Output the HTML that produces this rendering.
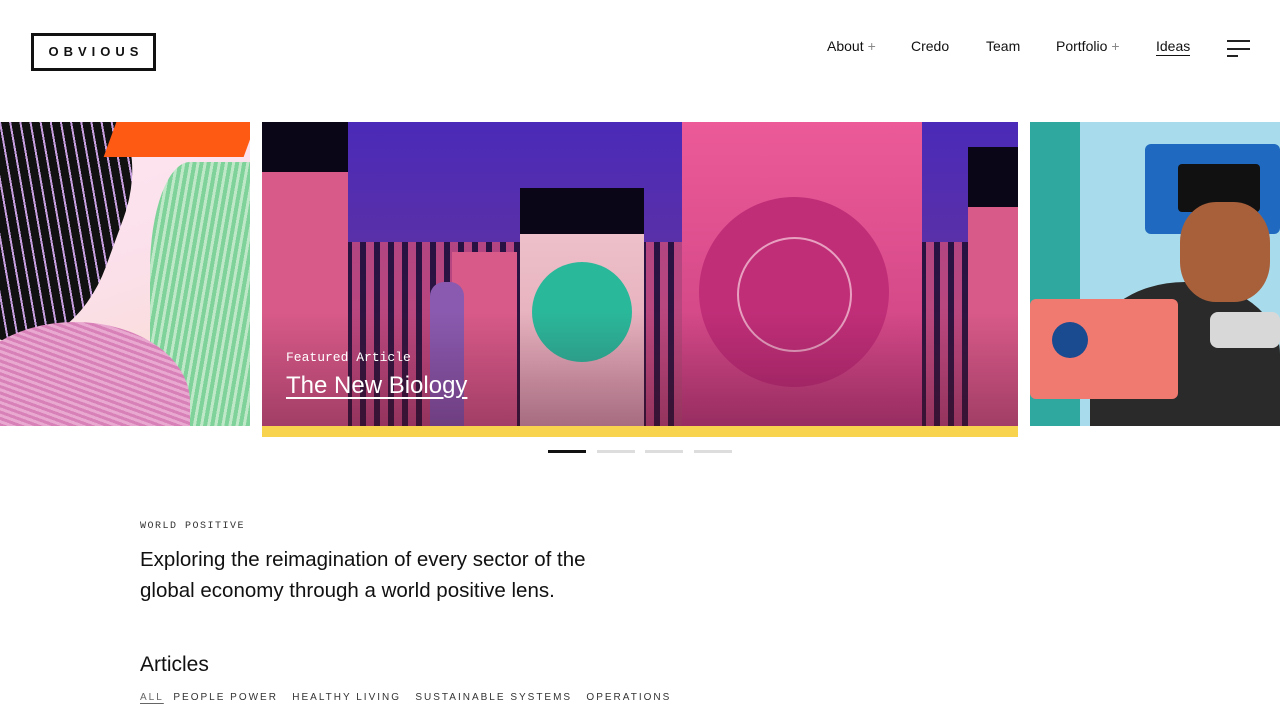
<!DOCTYPE html>
<html><head><meta charset="utf-8"><style>
*{margin:0;padding:0;box-sizing:border-box}
body{width:1280px;height:720px;overflow:hidden;background:#fff;font-family:"Liberation Sans",sans-serif;color:#111;position:relative}
.abs{position:absolute}
.logo{left:31px;top:33px;width:125px;height:38px;border:3px solid #111;font-weight:bold;font-size:13px;letter-spacing:5px;text-align:center;line-height:32px;padding-left:5px}
.nav{top:38px;font-size:14px;color:#111}
.plus{color:#888;margin-left:4px}
.hb{height:2px;background:#222}
.mono{font-family:"Liberation Mono",monospace}
</style></head><body>
<div class="abs logo">OBVIOUS</div>
<div class="abs nav" style="left:827px">About<span class="plus">+</span></div>
<div class="abs nav" style="left:911px">Credo</div>
<div class="abs nav" style="left:986px">Team</div>
<div class="abs nav" style="left:1056px">Portfolio<span class="plus">+</span></div>
<div class="abs nav" style="left:1156px;border-bottom:1px solid #111;padding-bottom:1px">Ideas</div>
<div class="abs hb" style="left:1227px;top:40px;width:23px"></div>
<div class="abs hb" style="left:1227px;top:48px;width:23px"></div>
<div class="abs hb" style="left:1227px;top:55px;width:11px"></div>

<!-- left image -->
<div class="abs" style="left:0;top:122px;width:250px;height:304px;overflow:hidden;background:linear-gradient(160deg,#fde6f2 0%,#fbe0ea 50%,#f7d9c9 100%)">
<div class="abs" style="left:-60px;top:-40px;width:180px;height:260px;background:repeating-linear-gradient(60deg,#111 0 8px,#c8a0e0 8px 10px);transform:rotate(20deg);border-radius:40%"></div>
<div class="abs" style="left:110px;top:0;width:140px;height:35px;background:#ff5a14;transform:skewX(-20deg)"></div>
<div class="abs" style="left:150px;top:40px;width:100px;height:270px;background:repeating-linear-gradient(100deg,#7fd29a 0 4px,#bfe8c8 4px 7px);border-radius:40% 0 0 0"></div>
<div class="abs" style="left:-40px;top:200px;width:230px;height:160px;background:repeating-linear-gradient(20deg,#d880b8 0 3px,#e8a8d0 3px 6px);border-radius:50% 50% 0 0"></div>
</div>

<!-- center image -->
<div class="abs" style="left:262px;top:122px;width:756px;height:304px;overflow:hidden;background:linear-gradient(180deg,#4a2ab8 0%,#5a30a8 40%,#b04a80 100%)">
<div class="abs" style="left:0;top:120px;width:756px;height:184px;background:repeating-linear-gradient(90deg,#1a0b2a 0 6px,#c84a78 6px 14px);opacity:.8"></div>
<div class="abs" style="left:0;top:10px;width:86px;height:294px;background:#d85a88"></div>
<div class="abs" style="left:0;top:0;width:86px;height:50px;background:#0b0518"></div>
<div class="abs" style="left:420px;top:0;width:240px;height:304px;background:linear-gradient(#ec5a98,#c84080)"></div>
<div class="abs" style="left:437px;top:75px;width:190px;height:190px;border-radius:50%;background:#c02e78"></div>
<div class="abs" style="left:475px;top:115px;width:115px;height:115px;border-radius:50%;border:2px solid #e8a0c0"></div>
<div class="abs" style="left:258px;top:66px;width:124px;height:238px;background:linear-gradient(#f0c8d0,#e0a0b0)"></div>
<div class="abs" style="left:258px;top:66px;width:124px;height:46px;background:#0b0518"></div>
<div class="abs" style="left:270px;top:140px;width:100px;height:100px;border-radius:50%;background:#2ab89a"></div>
<div class="abs" style="left:190px;top:130px;width:65px;height:174px;background:#d85a88"></div>
<div class="abs" style="left:706px;top:25px;width:50px;height:279px;background:#d85a88"></div>
<div class="abs" style="left:706px;top:25px;width:50px;height:60px;background:#0b0518"></div>
<div class="abs" style="left:168px;top:160px;width:34px;height:144px;background:#8a5ab0;border-radius:14px 14px 0 0"></div>
<div class="abs" style="left:0;top:190px;width:756px;height:114px;background:linear-gradient(rgba(0,0,0,0),rgba(60,10,40,.35))"></div>
<div class="abs mono" style="left:24px;top:228px;color:#fff;font-size:13px">Featured Article</div>
<div class="abs" style="left:24px;top:250px;color:#fff;font-size:24px;text-decoration:underline;text-underline-offset:4px">The New Biology</div>
</div>
<div class="abs" style="left:262px;top:426px;width:756px;height:11px;background:#f8d44e"></div>

<!-- right image -->
<div class="abs" style="left:1030px;top:122px;width:250px;height:304px;overflow:hidden;background:#a8dcec">
<div class="abs" style="left:0;top:0;width:50px;height:304px;background:#2fa8a0"></div>
<div class="abs" style="left:115px;top:22px;width:135px;height:90px;background:#1f6ac0;border-radius:6px"></div>
<div class="abs" style="left:148px;top:42px;width:82px;height:48px;background:#111;border-radius:4px"></div>
<div class="abs" style="left:60px;top:160px;width:190px;height:144px;background:#2a2a2a;border-radius:50% 50% 0 0"></div>
<div class="abs" style="left:150px;top:80px;width:90px;height:100px;background:#a8603a;border-radius:40%"></div>
<div class="abs" style="left:0;top:177px;width:148px;height:100px;background:#f07a70;border-radius:6px"></div>
<div class="abs" style="left:22px;top:200px;width:36px;height:36px;border-radius:50%;background:#1a4a90"></div>
<div class="abs" style="left:180px;top:190px;width:70px;height:36px;background:#d8d8d8;border-radius:8px"></div>
</div>

<div class="abs" style="left:548px;top:450px;width:38px;height:3px;background:#111"></div>
<div class="abs" style="left:597px;top:450px;width:38px;height:3px;background:#ddd"></div>
<div class="abs" style="left:645px;top:450px;width:38px;height:3px;background:#ddd"></div>
<div class="abs" style="left:694px;top:450px;width:38px;height:3px;background:#ddd"></div>

<div class="abs mono" style="left:140px;top:521px;font-size:10px;letter-spacing:1.5px;color:#333">WORLD POSITIVE</div>
<div class="abs" style="left:140px;top:544px;font-size:20.5px;line-height:31px;width:480px;color:#111">Exploring the reimagination of every sector of the global economy through a world positive lens.</div>
<div class="abs" style="left:140px;top:653px;font-size:21px;color:#111">Articles</div>
<div class="abs" style="left:140px;top:692px;font-size:10px;letter-spacing:2px;color:#333;white-space:nowrap">
<span style="text-decoration:underline;text-underline-offset:3px;color:#666">ALL</span>&nbsp; PEOPLE POWER&nbsp;&nbsp; HEALTHY LIVING&nbsp;&nbsp; SUSTAINABLE SYSTEMS&nbsp;&nbsp; OPERATIONS</div>
</body></html>
